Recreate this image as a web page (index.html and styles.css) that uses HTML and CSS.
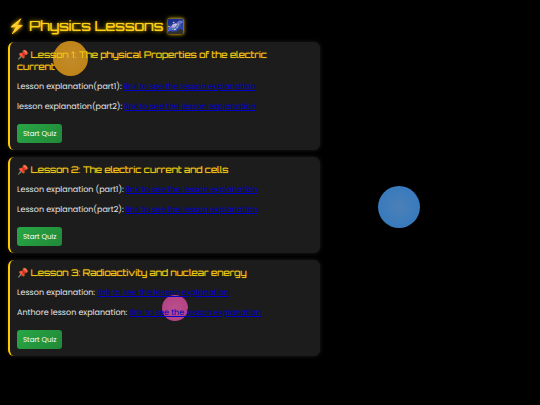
FILE: index.html
```
<!DOCTYPE html>
<html lang="en">
<head>
  <meta charset="UTF-8" />
  <meta name="viewport" content="width=device-width, initial-scale=1.0" />
  <title>Physics Lessons</title>
  <link rel="stylesheet" href="styles.css">
</head>
<body>
  <h1>⚡ Physics Lessons 🌌</h1>

  <main class="lessons">
    <section class="lesson">
      <h2>📌 Lesson 1: The physical Properties of the electric current</h2>
      <p>Lesson explanation(part1): <a href="#">link to see the lesson explanation</a></p>
      <p>lesson explanation(part2): <a href="#">link to see the lesson explanation</a></p>
      <button type="button">Start Quiz</button>
    </section>

    <section class="lesson">
      <h2>📌 Lesson 2: The electric current and cells</h2>
      <p>Lesson explanation (part1): <a href="#">link to see the lesson explanation</a></p>
      <p>Lesson explanation(part2): <a href="#">link to see the lesson explanation</a></p>
      <button type="button">Start Quiz</button>
    </section>

    <section class="lesson">
      <h2>📌 Lesson 3: Radioactivity and nuclear energy</h2>
      <p>Lesson explanation: <a href="#">link to see the lesson explanation</a></p>
      <p>Anthore lesson explanation: <a href="#">link to see the lesson explanation</a></p>
      <button type="button">Start Quiz</button>
    </section>
  </main>

  <div class="orb orb-orange"></div>
  <div class="orb orb-blue"></div>
  <div class="orb orb-pink"></div>
</body>
</html>
```
FILE: styles.css
```
* {
  margin: 0;
  padding: 0;
  box-sizing: border-box;
}
body {
  font-family: Poppins, Inter, sans-serif;
  font-size: 8px;
  text-rendering: geometricPrecision;
  background: #000;
  color: #e4e4e4;
  padding: 17px 8px;
  min-height: 100vh;
}
h1, h2 {
  font-family: Orbitron, "Noto Color Emoji", "DejaVu Sans", sans-serif;
  font-weight: normal;
  color: #ffd21a;
}
h1 {
  margin-bottom: 5px;
  font-size: 14px;
  line-height: 20px;
  text-shadow: 0 0 1px #ffcc00, 0 0 4px #ffcc00;
}
.lessons {
  display: flex;
  flex-direction: column;
  gap: 7px;
  max-width: 312px;
}
.lesson {
  padding: 8px 16px 7px 7px;
  background: #1c1c1c;
  border-left: 2px solid #ffc800;
  border-radius: 6px;
  box-shadow: 0 0 4px rgba(255, 255, 255, 0.12);
}
/* keep the text readable over the floating orbs */
h2, p {
  position: relative;
  z-index: 2;
}
h2 {
  margin-bottom: 7px;
  font-size: 9px;
  line-height: 12px;
  text-shadow: 0 0 1px #b38f00;
}
p {
  margin-bottom: 8px;
  line-height: 12px;
}
a {
  color: #0000c8;
}
button {
  display: block;
  margin-top: 11px;
  padding: 4px 6px;
  font-family: inherit;
  font-size: 7px;
  line-height: 11px;
  color: #fff;
  background: linear-gradient(135deg, #28a745, #218838);
  border: none;
  border-radius: 3px;
  cursor: pointer;
}
.orb {
  position: absolute;
  z-index: 1;
  border-radius: 50%;
  pointer-events: none;
}
.orb-orange {
  top: 41px;
  left: 53px;
  width: 35px;
  height: 35px;
  background: radial-gradient(circle, #c28c2c, #bd8010);
}
.orb-blue {
  top: 186px;
  left: 378px;
  width: 42px;
  height: 42px;
  background: radial-gradient(circle, #4c80b8, #3078bf);
}
.orb-pink {
  top: 295px;
  left: 162px;
  width: 26px;
  height: 26px;
  background: radial-gradient(circle, #b8508a, #b43c84);
}
```
